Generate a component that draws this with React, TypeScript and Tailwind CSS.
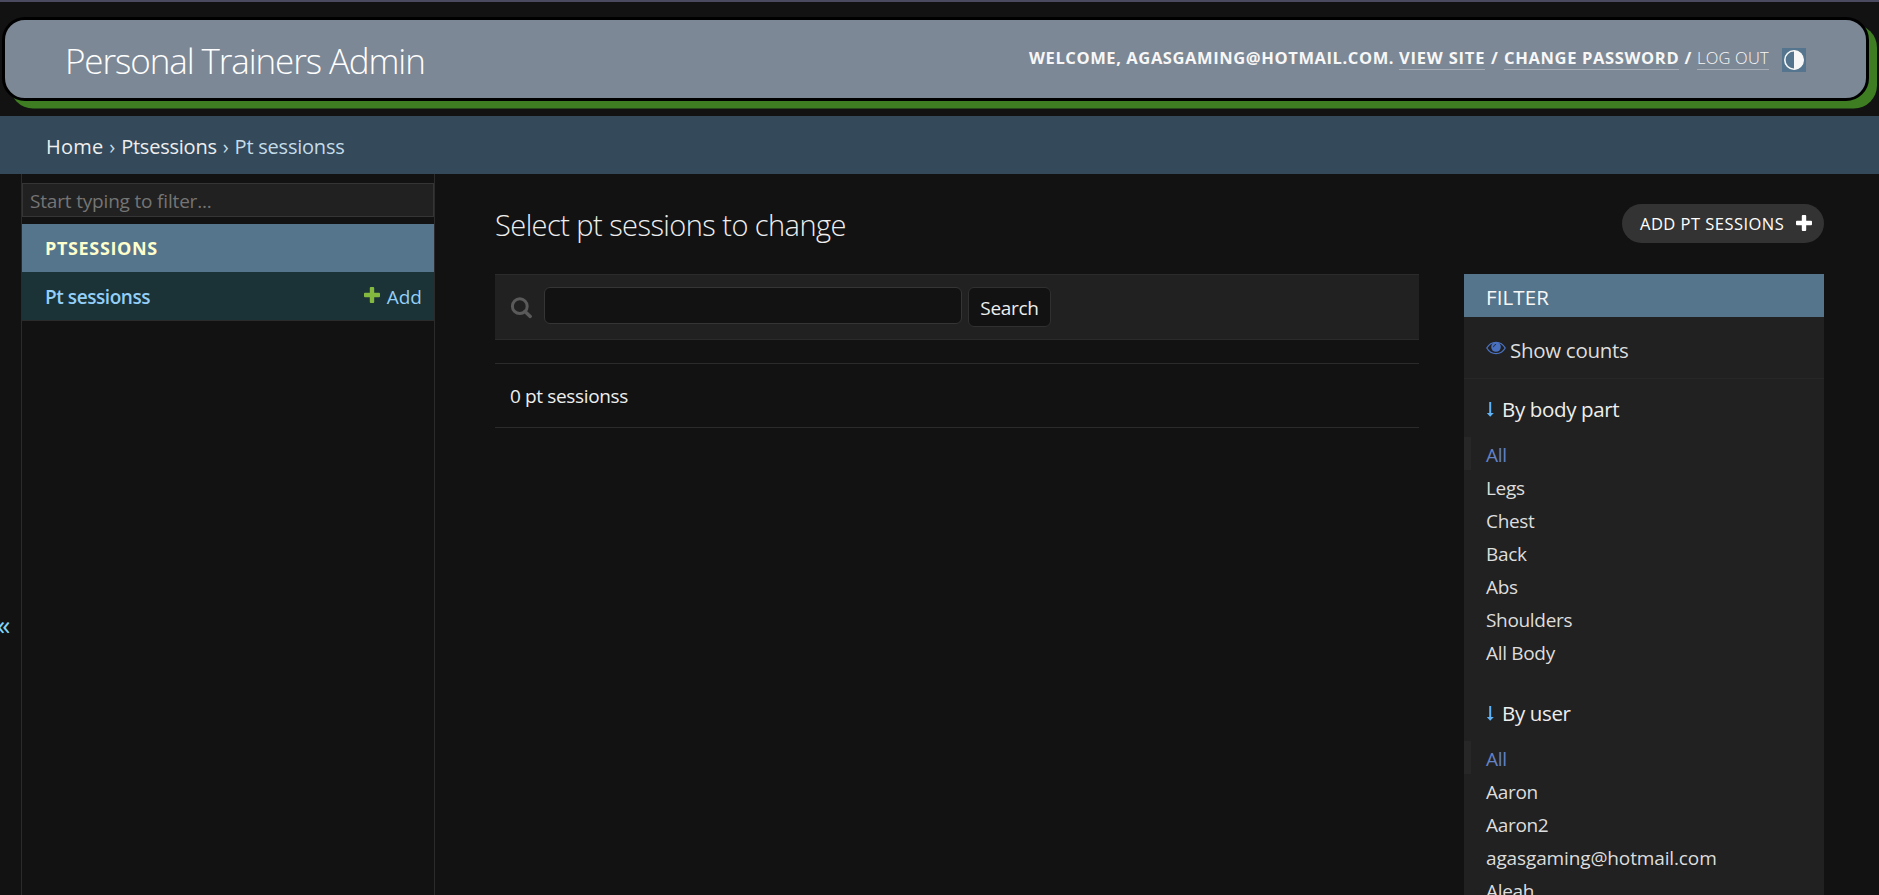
import React from "react";

const bodyParts = ["Legs", "Chest", "Back", "Abs", "Shoulders", "All Body"];
const users = ["Aaron", "Aaron2", "agasgaming@hotmail.com", "Aleah"];

function PlusIcon({ className }: { className: string }) {
  return (
    <svg viewBox="0 0 16 16" className={className} fill="currentColor">
      <path d="M6.7 0h2.6q.9 0 .9.9v4.9h4.9q.9 0 .9.9v2.6q0 .9-.9.9h-4.9v4.9q0 .9-.9.9H6.7q-.9 0-.9-.9v-4.9H.9q-.9 0-.9-.9V6.7q0-.9.9-.9h4.9V.9q0-.9.9-.9z" />
    </svg>
  );
}

function ArrowIcon() {
  return (
    <svg viewBox="0 0 8 15" className="mt-px h-[15px] w-2 shrink-0" fill="#5fb2f5">
      <path d="M3.200 0h2v11h2.600L4.200 14.800.8 11h2.400z" />
    </svg>
  );
}

function FilterGroup({ title, items }: { title: string; items: string[] }) {
  return (
    <section>
      <h3 className="flex h-[58px] items-center gap-2 pl-[22px] pt-[2px] text-[20.5px] tracking-[-0.35px] text-[#eeeeee]">
        <ArrowIcon />
        <span>{title}</span>
      </h3>
      <ul className="text-[19px] leading-[37px] tracking-[-0.32px] text-[#dddddd]">
        <li className="h-[33px] border-l-[7px] border-[#272727] pl-[15px] text-[#6482c6]">All</li>
        {items.map((item) => (
          <li key={item} className={item.includes("@") ? "h-[33px] pl-[22px] tracking-[-0.13px]" : "h-[33px] pl-[22px]"}>
            {item}
          </li>
        ))}
      </ul>
    </section>
  );
}

export default function App() {
  return (
    <div className="flex h-[895px] w-[1879px] flex-col overflow-hidden whitespace-nowrap bg-[#121212] font-['Open_Sans','Noto_Sans',sans-serif] text-[#eeeeee]">
      <div className="h-[2px] shrink-0 bg-[#4a4b60]" />
      <header className="ml-[2px] mt-[15px] flex h-[84px] w-[1867px] shrink-0 items-center justify-between rounded-[23px] border-[3px] border-black bg-[#7d8896] pl-[60px] pr-[60px] shadow-[8px_7.5px_0_#3e7d22]">
        <h1 className="pt-[3px] text-[35px] font-light leading-[50px] tracking-[-1.1px] text-white">Personal Trainers Admin</h1>
        <div className="flex items-center text-[16.5px] font-bold leading-[22px] text-[#f7f7f7]">
          <div className="mr-[13px] flex pb-[1px]">
            <span className="w-[370px] tracking-[0.6px]">WELCOME, AGASGAMING@HOTMAIL.COM.</span>
            <a className="w-[86px] border-b border-[#a6adb6] tracking-[0.8px]">VIEW SITE</a>
            <span className="w-[19px] text-center">/</span>
            <a className="w-[175px] border-b border-[#a6adb6] tracking-[0.65px]">CHANGE PASSWORD</a>
            <span className="w-[18px] text-center">/</span>
            <a className="w-[72px] border-b border-[#a6adb6] font-light tracking-[0.2px]">LOG OUT</a>
          </div>
          <svg viewBox="0 0 24 24" className="mt-[2px] h-6 w-6 bg-[#54758d]">
            <circle cx="12" cy="12" r="9.2" fill="none" stroke="#f7f7f7" strokeWidth="1.6" />
            <path d="M12 2.5a9.5 9.5 0 0 1 0 19z" fill="#f7f7f7" />
          </svg>
        </div>
      </header>
      <nav className="mt-[15px] flex h-[58px] shrink-0 items-center gap-[6px] bg-[#34495a] pl-[46px] pt-[4px] text-[20px] tracking-[-0.22px] text-[#c4dce8]">
        <a className="tracking-[0.2px] text-[#eeeeee]">Home</a>
        <span>›</span>
        <a className="text-[#eeeeee]">Ptsessions</a>
        <span>›</span>
        <span>Pt sessionss</span>
      </nav>
      <div className="flex min-h-0 flex-1">
        <div className="flex w-[22px] shrink-0 items-start border-r border-[#2b2b2b] pt-[437px]">
          <span className="-ml-[3px] text-[27px] leading-none text-[#81d4fa]">«</span>
        </div>
        <aside className="w-[413px] shrink-0 border-r border-[#2b2b2b] pt-[9px]">
          <div className="flex h-[34px] items-center border border-[#353535] bg-[#212121] pl-[7px] pt-[2px] text-[19px] tracking-[-0.18px] text-[#757575]">
            Start typing to filter...
          </div>
          <div className="mt-[7px] flex h-12 items-center bg-[#55758c] pl-[23px] text-[18px] font-bold tracking-[0.65px] text-[#ffffcc]">
            PTSESSIONS
          </div>
          <div className="flex h-[49px] items-center border-b border-[#2b2b2b] bg-[#1b3237] pl-[23px] pr-3 text-[19px] text-[#93cff8]">
            <a className="flex-1 pt-[2px] font-semibold tracking-[-0.43px]">Pt sessionss</a>
            <PlusIcon className="mr-[7px] mt-[-2px] h-4 w-4 text-[#83b93f]" />
            <a className="pt-[2px]">Add</a>
          </div>
        </aside>
        <main className="flex min-w-0 flex-1 flex-col pl-[60px] pr-[55px]">
          <div className="flex h-[100px] shrink-0 items-start justify-between">
            <h2 className="mt-[31px] text-[29px] font-light leading-[40px] tracking-[-0.56px] text-[#eeeeee]">Select pt sessions to change</h2>
            <a className="mt-[30px] flex h-[39px] w-[202px] items-center rounded-full bg-[#333333] pl-[18px] text-[16.5px] tracking-[0.47px] text-white">
              <span className="w-[156px] pt-[2px]">ADD PT SESSIONS</span>
              <PlusIcon className="mt-[-2px] h-4 w-4" />
            </a>
          </div>
          <div className="flex min-h-0 flex-1 gap-[45px]">
            <div className="w-[924px]">
              <div className="flex h-[66px] items-start border-y border-[#2b2b2b] bg-[#212121] pl-[15px] pt-3">
                <svg viewBox="0 0 22 22" className="mr-3 mt-[10px] h-[22px] w-[22px]" fill="none" stroke="#5a5a5a">
                  <circle cx="9.8" cy="9.2" r="7.4" strokeWidth="3" />
                  <path d="M15 14.400l5.200 5" strokeWidth="3.4" strokeLinecap="round" />
                </svg>
                <input className="mr-[6px] h-[37px] w-[418px] rounded-md border border-[#353535] bg-[#121212] outline-none" />
                <button className="h-10 w-[83px] rounded-md border border-[#303030] bg-[#121212] pt-[2px] text-[19px] tracking-[-0.3px] text-[#eeeeee]">Search</button>
              </div>
              <p className="mt-[23px] flex h-[65px] items-center border-y border-[#2b2b2b] pl-[15px] pt-[2px] text-[19px] tracking-[-0.36px]">0 pt sessionss</p>
            </div>
            <aside className="w-[360px] overflow-hidden bg-[#212121]">
              <h2 className="flex h-[43px] items-center bg-[#55758c] pl-[22px] pt-[4px] text-[20.5px] tracking-[0.1px] text-[#f7f7f7]">FILTER</h2>
              <div className="flex h-[62px] items-center border-b border-[#272727] pl-[22px] pt-[5px] text-[20.5px] tracking-[-0.3px] text-[#dddddd]">
                <svg viewBox="0 0 20 14" className="mr-1 mt-[-5px] h-[14px] w-5">
                  <path d="M.8 7C5 -.6 15 -.6 19.200 7 15 14.400 5 14.400.8 7z" fill="none" stroke="#4a71c0" strokeWidth="1.3" />
                  <circle cx="10" cy="6" r="4.800" fill="#4a71c0" />
                  <path d="M7.500 5.800q.2-2 2.200-2.400" fill="none" stroke="#212121" strokeWidth=".9" strokeLinecap="round" />
                </svg>
                Show counts
              </div>
              <FilterGroup title="By body part" items={bodyParts} />
              <div className="h-[15px]" />
              <FilterGroup title="By user" items={users} />
            </aside>
          </div>
        </main>
      </div>
    </div>
  );
}
